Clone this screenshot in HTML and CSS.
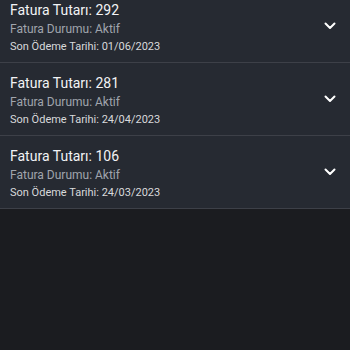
FILE: index.html
```html
<!DOCTYPE html>
<html lang="tr">
<head>
<meta charset="utf-8">
<link rel="stylesheet" href="styles.css">
</head>
<body>
<div class="list">
  <div class="item">
    <div class="texts">
      <div class="title">Fatura Tutarı: 292</div>
      <div class="status">Fatura Durumu: Aktif</div>
      <div class="date">Son Ödeme Tarihi: 01/06/2023</div>
    </div>
    <svg class="chev" viewBox="0 0 12 8" width="12" height="8"><polyline points="1.5,1.5 6,6 10.5,1.5" fill="none" stroke="#fff" stroke-width="2" stroke-linecap="round" stroke-linejoin="round"/></svg>
  </div>
  <div class="item">
    <div class="texts">
      <div class="title">Fatura Tutarı: 281</div>
      <div class="status">Fatura Durumu: Aktif</div>
      <div class="date">Son Ödeme Tarihi: 24/04/2023</div>
    </div>
    <svg class="chev" viewBox="0 0 12 8" width="12" height="8"><polyline points="1.5,1.5 6,6 10.5,1.5" fill="none" stroke="#fff" stroke-width="2" stroke-linecap="round" stroke-linejoin="round"/></svg>
  </div>
  <div class="item">
    <div class="texts">
      <div class="title">Fatura Tutarı: 106</div>
      <div class="status">Fatura Durumu: Aktif</div>
      <div class="date">Son Ödeme Tarihi: 24/03/2023</div>
    </div>
    <svg class="chev" viewBox="0 0 12 8" width="12" height="8"><polyline points="1.5,1.5 6,6 10.5,1.5" fill="none" stroke="#fff" stroke-width="2" stroke-linecap="round" stroke-linejoin="round"/></svg>
  </div>
</div>
</body>
</html>
```
FILE: styles.css
```css
html, body {
  margin: 0;
  padding: 0;
  height: 100%;
  background: #1b1c20;
  font-family: Roboto, "Liberation Sans", sans-serif;
  overflow: hidden;
}
.list {
  margin-top: -10px;
}
.item {
  display: flex;
  align-items: center;
  background: #262a32;
  border-bottom: 1px solid #3d4048;
  padding: 10px 14px 7px 10px;
}
.texts {
  flex: 1;
}
.title {
  font-size: 14px;
  line-height: 20px;
  color: #f2f3f5;
}
.status {
  font-size: 12px;
  line-height: 18px;
  color: #a0a5ad;
}
.date {
  font-size: 11px;
  line-height: 17px;
  color: #d8d9db;
}
.chev {
  margin-bottom: 4px;
}
```
